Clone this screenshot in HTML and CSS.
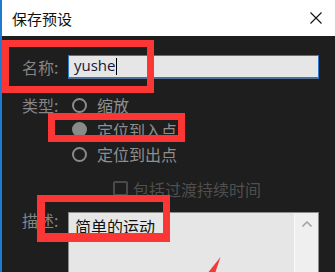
FILE: index.html
```html
<!DOCTYPE html>
<html lang="zh-CN">
<head>
  <meta charset="UTF-8">
  <title>保存预设</title>
  <link rel="stylesheet" href="styles.css">
</head>
<body>
  <div class="window">
    <div class="titlebar">
      <span class="title">保存预设</span>
      <svg class="close" width="12" height="12" viewBox="0 0 12 12">
        <path d="M0.5 0.5 L11.5 11.5 M11.5 0.5 L0.5 11.5" stroke="#111" stroke-width="1.1" fill="none"/>
      </svg>
    </div>
    <div class="form">
      <div class="row name-row">
        <label class="label">名称:</label>
        <div class="input"><span class="value">yushe</span><span class="caret"></span></div>
      </div>
      <div class="row type-row">
        <span class="label">类型:</span>
        <div class="radios">
          <div class="radio"><span class="dot"></span>缩放</div>
          <div class="radio checked"><span class="dot"></span>定位到入点</div>
          <div class="radio"><span class="dot"></span>定位到出点</div>
        </div>
      </div>
      <div class="row check-row">
        <span></span>
        <div class="check"><span class="box"></span>包括过渡持续时间</div>
      </div>
      <div class="row desc-row">
        <span class="label">描述:</span>
        <div class="textarea">
          <div class="text">简单的运动</div>
          <div class="scrollbar">
            <svg width="10" height="6" viewBox="0 0 10 6">
              <path d="M0.5 5.5 L5 1 L9.5 5.5" stroke="#a6a6a6" stroke-width="1.6" fill="none"/>
            </svg>
          </div>
        </div>
      </div>
    </div>

    <!-- annotations -->
    <div class="mark mark-name"></div>
    <div class="mark mark-radio"></div>
    <div class="mark mark-desc"></div>
    <svg class="arrow" width="335" height="272" viewBox="0 0 335 272">
      <polygon points="220.5,257 215.5,272 208.5,272" fill="#f23a3a"/>
    </svg>
  </div>
</body>
</html>
```

FILE: styles.css
```css
body {
  margin: 0;
  background: #1e1e1e;
  font-family: "Noto Sans CJK SC", "Noto Sans", sans-serif;
}
.window {
  position: relative;
  width: 335px;
  height: 272px;
  overflow: hidden;
  background: #1e1e1e;
  border-left: 2px solid #1f7ad2;
  box-sizing: border-box;
}
.titlebar {
  height: 36px;
  background: #fff;
  display: flex;
  align-items: center;
  justify-content: space-between;
  padding: 0 13px 0 10px;
}
.title {
  font-size: 15px;
  color: #111;
  line-height: 1;
  margin-top: 1px;
}
.close {
  display: block;
}
.form {
  padding: 19px 16px 0 20px;
}
.row {
  display: grid;
  grid-template-columns: 46px 1fr;
  align-items: start;
}
.label {
  font-size: 16px;
  color: #858585;
  line-height: 24px;
}
.input {
  height: 24px;
  box-sizing: border-box;
  background: #e6e6e6;
  border: 1px solid #2f78cf;
  border-bottom: 2px solid #4f7098;
  display: flex;
  align-items: center;
  padding-left: 5px;
}
.input .value {
  font-family: "Open Sans", "Noto Sans", sans-serif;
  font-size: 15px;
  color: #15183a;
  line-height: 1;
  margin-top: -2px;
}
.caret {
  width: 1px;
  height: 17px;
  background: #000;
  margin-left: 1px;
}
.type-row {
  margin-top: 14px;
}
.radios {
  display: flex;
  flex-direction: column;
}
.radio {
  display: flex;
  align-items: center;
  height: 24.5px;
  font-size: 16px;
  color: #8f8f8f;
  padding-left: 4px;
}
.dot {
  width: 15px;
  height: 15px;
  box-sizing: border-box;
  border: 2px solid #8a8a8a;
  border-radius: 50%;
  margin-right: 10px;
}
.radio.checked .dot {
  background: #8a8a8a;
  border-color: #8a8a8a;
}
.check-row {
  margin-top: 10px;
}
.check {
  display: flex;
  align-items: center;
  height: 24px;
  font-size: 16px;
  color: #4f4f4f;
  padding-left: 45px;
}
.box {
  width: 15px;
  height: 15px;
  box-sizing: border-box;
  border: 2px solid #4a4a4a;
  border-radius: 2px;
  margin-right: 5px;
}
.desc-row {
  margin-top: 11px;
}
.desc-row .label {
  margin-top: -4px;
}
.textarea {
  height: 80px;
  background: #e6e6e6;
  border: 1px solid #8c8c8c;
  border-bottom: none;
  display: flex;
}
.textarea .text {
  flex: 1;
  font-size: 16px;
  color: #111;
  padding: 2px 0 0 6px;
  line-height: 22px;
}
.scrollbar {
  width: 24px;
  background: #efefef;
  border-left: 1px solid #fafafa;
  display: flex;
  justify-content: center;
  padding-top: 8px;
  box-sizing: border-box;
  align-items: flex-start;
}
.scrollbar svg {
  display: block;
}
.mark {
  position: absolute;
  border: 7px solid #fc3535;
  box-sizing: border-box;
}
.mark-name {
  left: 0;
  top: 40px;
  width: 152px;
  height: 53px;
}
.mark-radio {
  left: 46px;
  top: 113px;
  width: 137px;
  height: 29px;
}
.mark-desc {
  left: 35px;
  top: 195px;
  width: 133px;
  height: 47px;
  border-width: 7px 7px 9px 8px;
}
.arrow {
  position: absolute;
  left: -2px;
  top: 0;
}
```
